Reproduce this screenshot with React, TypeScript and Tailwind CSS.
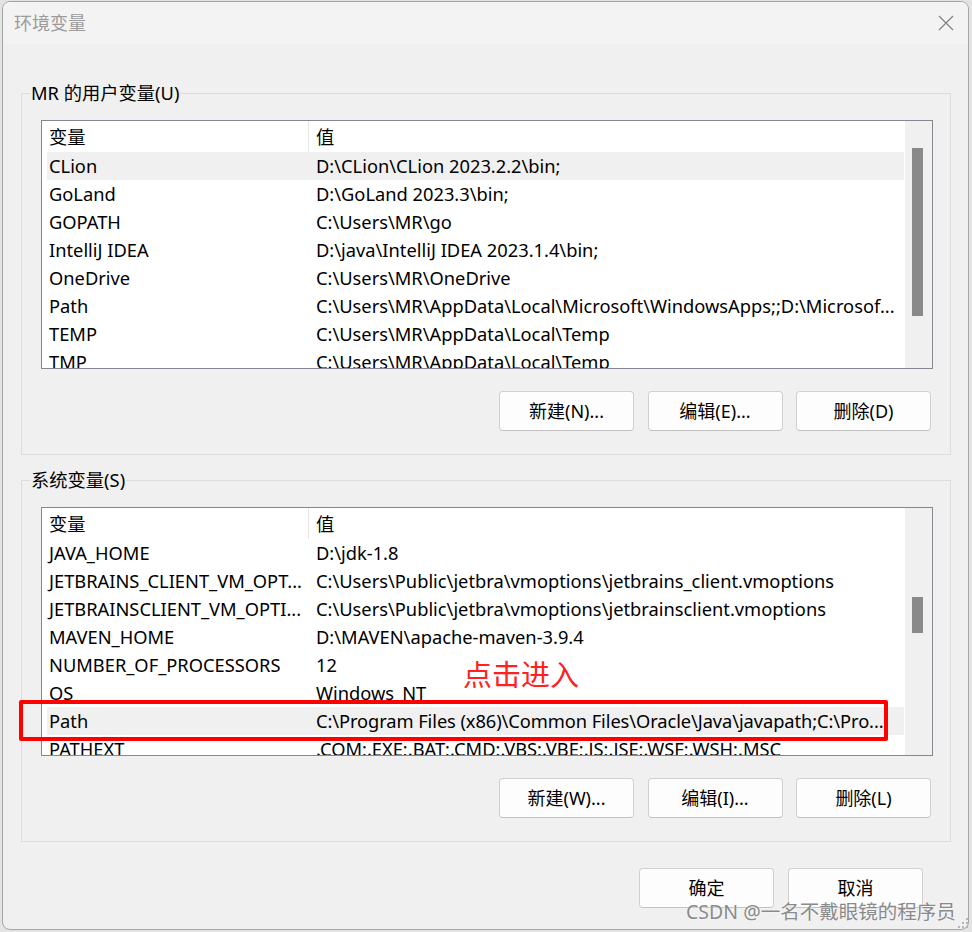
import React from "react";

type Row = [string, string];

const userVars: Row[] = [
  ["CLion", "D:\\CLion\\CLion 2023.2.2\\bin;"],
  ["GoLand", "D:\\GoLand 2023.3\\bin;"],
  ["GOPATH", "C:\\Users\\MR\\go"],
  ["IntelliJ IDEA", "D:\\java\\IntelliJ IDEA 2023.1.4\\bin;"],
  ["OneDrive", "C:\\Users\\MR\\OneDrive"],
  ["Path", "C:\\Users\\MR\\AppData\\Local\\Microsoft\\WindowsApps;;D:\\Microsof..."],
  ["TEMP", "C:\\Users\\MR\\AppData\\Local\\Temp"],
  ["TMP", "C:\\Users\\MR\\AppData\\Local\\Temp"],
];

const sysVars: Row[] = [
  ["JAVA_HOME", "D:\\jdk-1.8"],
  ["JETBRAINS_CLIENT_VM_OPT...", "C:\\Users\\Public\\jetbra\\vmoptions\\jetbrains_client.vmoptions"],
  ["JETBRAINSCLIENT_VM_OPTI...", "C:\\Users\\Public\\jetbra\\vmoptions\\jetbrainsclient.vmoptions"],
  ["MAVEN_HOME", "D:\\MAVEN\\apache-maven-3.9.4"],
  ["NUMBER_OF_PROCESSORS", "12"],
  ["OS", "Windows_NT"],
  ["Path", "C:\\Program Files (x86)\\Common Files\\Oracle\\Java\\javapath;C:\\Pro..."],
  ["PATHEXT", ".COM;.EXE;.BAT;.CMD;.VBS;.VBE;.JS;.JSE;.WSF;.WSH;.MSC"],
];

function VarList({
  rows,
  selected,
  thumbTop,
  thumbH,
  tightRow = -1,
}: {
  rows: Row[];
  selected: number;
  thumbTop: string;
  thumbH: string;
  tightRow?: number;
}) {
  return (
    <div className="h-[249px] w-[892px] border border-[#828790] bg-white flex overflow-hidden text-[18.3px]">
      <div className="flex-1 pl-[5px] pr-[1px] flex flex-col overflow-hidden">
        <div className="h-[31px] shrink-0 flex">
          <div className="w-[262px] shrink-0 pl-[2px] border-r border-[#e5e5e5] flex items-center">
            变量
          </div>
          <div className="flex-1 pl-[7px] flex items-center">值</div>
        </div>
        {rows.map(([k, v], i) => (
          <div
            key={k + i}
            className={
              "h-[28px] shrink-0 flex items-center " +
              (i === selected ? "bg-[#f0f0f0]" : "")
            }
          >
            <div className="w-[262px] shrink-0 pl-[2px] whitespace-nowrap overflow-hidden">
              {k}
            </div>
            <div
              className={
                "flex-1 pl-[7px] whitespace-nowrap overflow-hidden " +
                (i === tightRow ? "tracking-[-0.08px]" : "")
              }
            >
              {v}
            </div>
          </div>
        ))}
      </div>
      <div className="w-[27px] shrink-0 bg-[#f0f0f0] pl-[7px]">
        <div className={"w-[11px] bg-[#8a8a8a] " + thumbTop + " " + thumbH} />
      </div>
    </div>
  );
}

function Btn({ children }: { children: React.ReactNode }) {
  return (
    <div className="h-[40px] w-[135px] rounded-[4px] border border-[#d0d0d0] border-b-[#c2c2c2] bg-[#fdfdfd] flex items-center justify-center">
      {children}
    </div>
  );
}

function Group({
  legend,
  children,
  className,
}: {
  legend: string;
  children: React.ReactNode;
  className?: string;
}) {
  return (
    <fieldset
      className={
        "w-[930px] border border-[#dcdcdc] pl-[8px] pr-[17px] pt-[15px] pb-[23px] " +
        (className || "")
      }
    >
      <legend className="px-[1px] leading-[24px] text-[18.3px]">{legend}</legend>
      <div className="pl-[11px]">{children}</div>
    </fieldset>
  );
}

export default function App() {
  return (
    <div
      className="relative w-[972px] h-[932px] overflow-hidden bg-[#e3e3e3] pt-px pl-[2px] text-[18px] text-black"
      style={{ fontFamily: '"Noto Sans", "Noto Sans CJK SC", sans-serif' }}
    >
      <div className="w-[967px] h-[929px] rounded-[8px] border border-[#a5a5a5] bg-[#f0f0f0] overflow-hidden flex flex-col">
        {/* title bar */}
        <div className="h-[42px] shrink-0 bg-[#f3f3f3] flex items-center justify-between pl-[11px] pr-[14px]">
          <span className="text-[#9b9b9b] text-[18px] leading-[24px]">环境变量</span>
          <svg width="16" height="16" viewBox="0 0 16 16" className="block">
            <path d="M1 1 L15 15 M15 1 L1 15" stroke="#808080" strokeWidth="1.2" fill="none" />
          </svg>
        </div>

        {/* content */}
        <div className="pl-[18px] pt-[37px]">
          <Group legend="MR 的用户变量(U)">
            <VarList rows={userVars} selected={0} thumbTop="mt-[27px]" thumbH="h-[168px]" />
            <div className="mt-[22px] pr-[2px] flex justify-end gap-[13.5px]">
              <Btn>新建(N)...</Btn>
              <Btn>编辑(E)...</Btn>
              <Btn>删除(D)</Btn>
            </div>
          </Group>

          <Group legend="系统变量(S)" className="mt-[13px]">
            <VarList
              rows={sysVars}
              selected={6}
              tightRow={6}
              thumbTop="mt-[89px]"
              thumbH="h-[36px]"
            />
            <div className="mt-[22px] pr-[2px] flex justify-end gap-[13.5px]">
              <Btn>新建(W)...</Btn>
              <Btn>编辑(I)...</Btn>
              <Btn>删除(L)</Btn>
            </div>
          </Group>

          <div className="mt-[26px] pr-[45px] flex justify-end gap-[14px]">
            <Btn>确定</Btn>
            <Btn>取消</Btn>
          </div>
        </div>
      </div>

      {/* annotation: red box */}
      <div className="absolute left-[19px] top-[700px] w-[869px] h-[41px] border-[4px] border-[#ff0000] rounded-[2px] pointer-events-none" />
      {/* annotation: text */}
      <div className="absolute left-[463px] top-[660px] text-[29px] leading-[29px] text-[#ff2020] whitespace-nowrap">
        点击进入
      </div>

      {/* watermark */}
      <div
        className="absolute left-[686px] top-[900px] text-[19.5px] leading-[24px] text-[#8a8a8a] whitespace-nowrap"
        style={{ textShadow: "0 0 2px #ffffff" }}
      >
        CSDN @一名不戴眼镜的程序员
      </div>

      {/* resize grip */}
      <svg className="absolute left-[958px] top-[918px]" width="12" height="12" viewBox="0 0 12 12">
        <rect x="8" y="0" width="2" height="2" fill="#b5b5b5" />
        <rect x="4" y="4" width="2" height="2" fill="#b5b5b5" />
        <rect x="8" y="4" width="2" height="2" fill="#b5b5b5" />
        <rect x="0" y="8" width="2" height="2" fill="#b5b5b5" />
        <rect x="4" y="8" width="2" height="2" fill="#b5b5b5" />
        <rect x="8" y="8" width="2" height="2" fill="#b5b5b5" />
      </svg>
    </div>
  );
}
